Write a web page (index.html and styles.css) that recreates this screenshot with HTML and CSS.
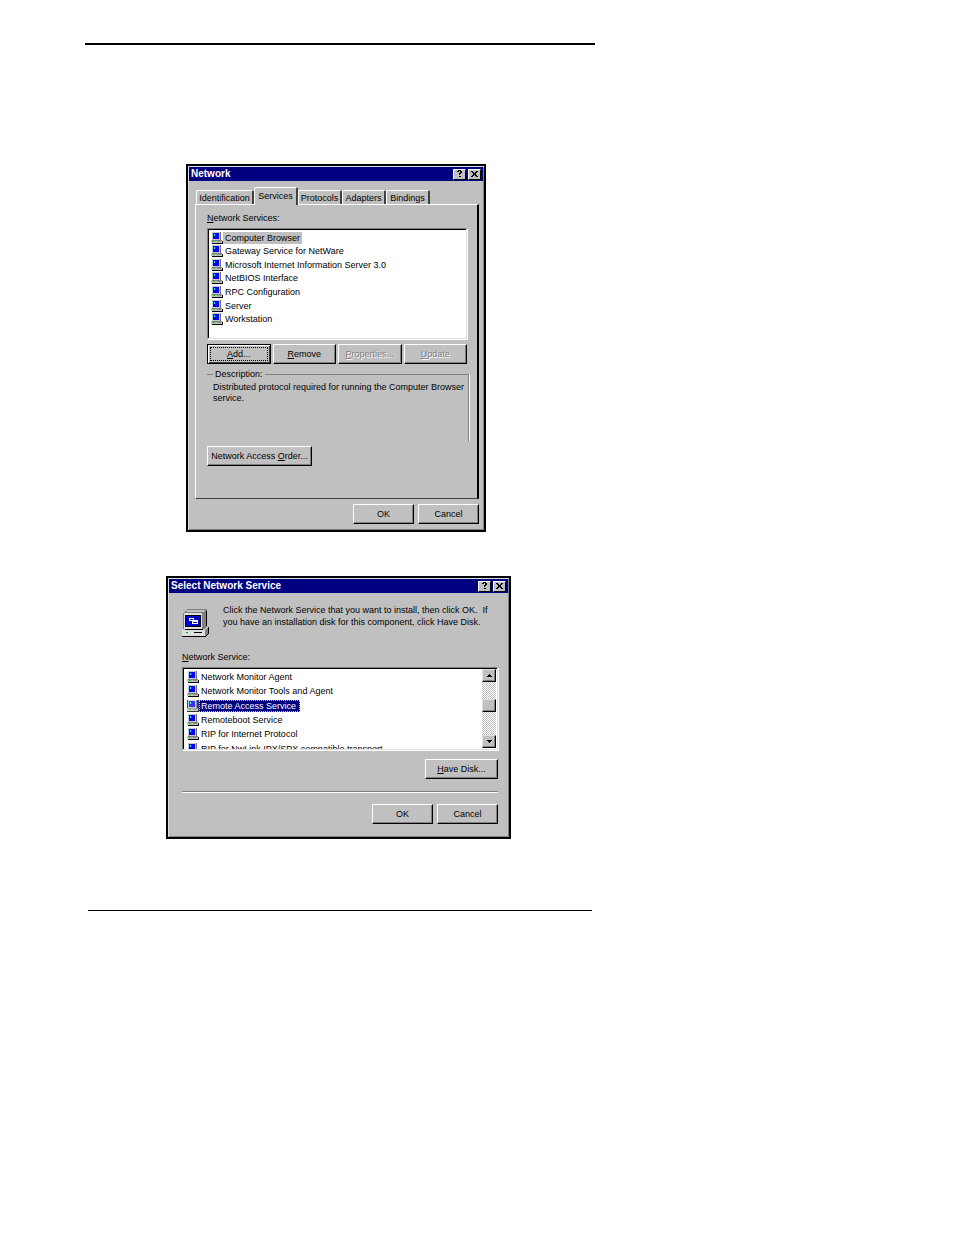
FILE: index.html
```
<!DOCTYPE html>
<html lang="en">
<head>
    <meta charset="UTF-8">
    <meta name="viewport" content="width=device-width, initial-scale=1.0">
    <title>Network - Select Network Service</title>
    <link rel="stylesheet" href="styles.css">
</head>
<body>

    <svg class="symbols" aria-hidden="true">
        <symbol id="pc" viewBox="0 0 12 12">
            <path d="M1 0h9v9H1z" fill="#707070"/>
            <path d="M1 0h8v8H1z" fill="#c8c8c8"/>
            <path d="M2 1h6v6H2z" fill="#0000f0"/>
            <path d="M3 2h1v2H3z" fill="#00ffff"/>
            <path d="M0 8h11v3H0z" fill="#c0c0c0"/>
            <path d="M1 8h10v1H1z" fill="#808080"/>
            <path d="M2 9h2v1H2z" fill="#00e000"/>
            <path d="M6 9h4v1H6z" fill="#909090"/>
            <path d="M1 11h11v1H1zM11 9h1v3h-1z" fill="#000"/>
        </symbol>
        <symbol id="help" viewBox="0 0 7 8">
            <path d="M2 0h3v1H2zM1 1h2v1H1zM4 1h2v2H4zM3 3h2v1H3zM3 4h1v1H3zM3 6h2v1H3z"/>
        </symbol>
        <symbol id="close" viewBox="0 0 7 8">
            <path d="M0 1h2v1H0zM5 1h2v1H5zM1 2h2v1H1zM4 2h2v1H4zM2 3h3v2H2zM1 5h2v1H1zM4 5h2v1H4zM0 6h2v1H0zM5 6h2v1H5z"/>
        </symbol>
    </svg>

    <main class="sheet">

        <section class="dialog network" aria-labelledby="network-title">
            <header class="titlebar">
                <h1 id="network-title">Network</h1>
                <button class="caption" aria-label="Help"><svg><use href="#help"/></svg></button>
                <button class="caption" aria-label="Close"><svg><use href="#close"/></svg></button>
            </header>

            <div class="tabs" role="tablist">
                <button class="tab tab-wide" role="tab">Identification</button>
                <button class="tab active" role="tab" aria-selected="true">Services</button>
                <button class="tab" role="tab">Protocols</button>
                <button class="tab" role="tab">Adapters</button>
                <button class="tab" role="tab">Bindings</button>
            </div>

            <div class="panel" role="tabpanel">
                <p class="label" id="services-label"><u>N</u>etwork Services:</p>
                <ul class="listbox services" role="listbox" aria-labelledby="services-label">
                    <li role="option" class="current"><svg class="pc"><use href="#pc"/></svg><span>Computer Browser</span></li>
                    <li role="option"><svg class="pc"><use href="#pc"/></svg><span>Gateway Service for NetWare</span></li>
                    <li role="option"><svg class="pc"><use href="#pc"/></svg><span>Microsoft Internet Information Server 3.0</span></li>
                    <li role="option"><svg class="pc"><use href="#pc"/></svg><span>NetBIOS Interface</span></li>
                    <li role="option"><svg class="pc"><use href="#pc"/></svg><span>RPC Configuration</span></li>
                    <li role="option"><svg class="pc"><use href="#pc"/></svg><span>Server</span></li>
                    <li role="option"><svg class="pc"><use href="#pc"/></svg><span>Workstation</span></li>
                </ul>

                <div class="actions">
                    <button class="btn default"><span><u>A</u>dd...</span></button>
                    <button class="btn"><span><u>R</u>emove</span></button>
                    <button class="btn" disabled><span><u>P</u>roperties...</span></button>
                    <button class="btn" disabled><span><u>U</u>pdate</span></button>
                </div>

                <fieldset class="description">
                    <legend>Description:</legend>
                    <p>Distributed protocol required for running the Computer Browser<br>service.</p>
                </fieldset>

                <button class="btn order"><span>Network Access <u>O</u>rder...</span></button>
            </div>

            <footer class="buttons">
                <button class="btn">OK</button>
                <button class="btn">Cancel</button>
            </footer>
        </section>

        <section class="dialog select" aria-labelledby="select-title">
            <header class="titlebar">
                <h1 id="select-title">Select Network Service</h1>
                <button class="caption" aria-label="Help"><svg><use href="#help"/></svg></button>
                <button class="caption" aria-label="Close"><svg><use href="#close"/></svg></button>
            </header>

            <div class="content">
                <div class="intro">
                    <svg class="computer" viewBox="0 0 28 28" aria-hidden="true">
                        <path d="M1 4l4-4h19l1 1v16l-3 3H1z" fill="#808080"/>
                        <path d="M2 4h18v16H2z" fill="#dfdfdf"/>
                        <path d="M3 3l2-2h18l-2 2z" fill="#c0c0c0"/>
                        <path d="M3 6h16v12H3z" fill="#000"/>
                        <path d="M4 7h14v10H4z" fill="#0000d0"/>
                        <path d="M7 9h5v3H7zM10 11h6v4h-6z" fill="#fff"/>
                        <path d="M8 10h3v1H8zM11 13h4v1h-4z" fill="#000080"/>
                        <path d="M24 2h1v15h-1zM3 20h18v1H3z" fill="#000"/>
                        <path d="M0 21h23v6H0z" fill="#dfdfdf"/>
                        <path d="M23 21l3-3v6l-3 3z" fill="#808080"/>
                        <path d="M0 27h24v1H0zM26 18h1v7h-1zM24 26h1v1h-1zM25 25h1v1h-1zM12 23h8v1h-8z" fill="#000"/>
                        <path d="M4 23h2v1H4z" fill="#00a000"/>
                    </svg>
                    <p>Click the Network Service that you want to install, then click OK.&nbsp; If you have an installation disk for this component, click Have Disk.</p>
                </div>

                <p class="label" id="service-label"><u>N</u>etwork Service:</p>
                <div class="listbox scroller">
                    <ul class="choices" role="listbox" aria-labelledby="service-label">
                        <li role="option"><svg class="pc"><use href="#pc"/></svg><span>Network Monitor Agent</span></li>
                        <li role="option"><svg class="pc"><use href="#pc"/></svg><span>Network Monitor Tools and Agent</span></li>
                        <li role="option" class="selected" aria-selected="true"><svg class="pc"><use href="#pc"/></svg><span>Remote Access Service</span></li>
                        <li role="option"><svg class="pc"><use href="#pc"/></svg><span>Remoteboot Service</span></li>
                        <li role="option"><svg class="pc"><use href="#pc"/></svg><span>RIP for Internet Protocol</span></li>
                        <li role="option"><svg class="pc"><use href="#pc"/></svg><span>RIP for NwLink IPX/SPX compatible transport</span></li>
                    </ul>
                    <div class="scrollbar">
                        <button class="arrow" aria-label="Scroll up"><svg viewBox="0 0 5 3"><path d="M2 0h1v1H2zM1 1h3v1H1zM0 2h5v1H0z"/></svg></button>
                        <div class="thumb"></div>
                        <button class="arrow" aria-label="Scroll down"><svg viewBox="0 0 5 3"><path d="M0 0h5v1H0zM1 1h3v1H1zM2 2h1v1H2z"/></svg></button>
                    </div>
                </div>

                <button class="btn disk"><span><u>H</u>ave Disk...</span></button>
                <hr>
                <footer class="buttons">
                    <button class="btn">OK</button>
                    <button class="btn">Cancel</button>
                </footer>
            </div>
        </section>

    </main>

</body>
</html>
```

FILE: styles.css
```
* {
    box-sizing: border-box;
}

body {
    margin: 0;
    background: white;
    color: black;
    font-family: "Liberation Sans", Arial, sans-serif;
    font-size: 9px;
    line-height: 12px;
}

h1, p, ul {
    margin: 0;
    padding: 0;
}

button {
    font: inherit;
    color: inherit;
    padding: 0;
}

u {
    text-underline-offset: 1px;
}

svg {
    shape-rendering: crispEdges;
}

.symbols {
    display: none;
}

/* printed page between the two rules */
.sheet {
    max-width: 510px;
    margin: 43px 0 0 85px;
    padding: 119px 0 72px;
    border-top: 2px solid black;
    position: relative;
}
.sheet::after {
    content: "";
    position: absolute;
    left: 3px;
    right: 3px;
    bottom: 0;
    border-bottom: 1px solid black;
}

/* dialogs */
.dialog {
    background: #c0c0c0;
    border: 2px solid black;
    box-shadow: inset 1px 1px #dfdfdf, inset -1px -1px #808080;
    padding: 1px;
}
.network {
    max-width: 300px;
    margin-left: 101px;
}
.select {
    max-width: 345px;
    margin: 44px 0 0 81px;
}

.titlebar {
    display: flex;
    align-items: center;
    gap: 2px;
    height: 14px;
    padding: 0 2px;
    background: #000080;
    color: white;
}
.titlebar h1 {
    flex: 1;
    font-size: 10px;
    font-weight: bold;
}
.caption {
    display: flex;
    align-items: center;
    justify-content: center;
    width: 13px;
    height: 11px;
    background: #c0c0c0;
    border: 1px solid;
    border-color: white black black white;
    color: black;
}
.caption svg {
    width: 7px;
    height: 8px;
}

/* tabs */
.tabs {
    display: flex;
    align-items: flex-end;
    height: 17px;
    margin: 6px 0 0 7px;
}
.tab {
    width: 44px;
    height: 14px;
    background: #c0c0c0;
    border: 1px solid white;
    border-right: 2px solid #404040;
    border-bottom: none;
    border-radius: 2px 2px 0 0;
    white-space: nowrap;
}
.tab-wide {
    width: 58px;
}
.tab.active {
    height: 18px;
    margin-bottom: -1px;
    padding-bottom: 2px;
    z-index: 1;
}

.panel {
    margin: 0 4px 0 6px;
    padding: 7px 10px 32px 11px;
    border: 1px solid white;
    border-right: 2px solid black;
    border-bottom: 1px solid #404040;
}

/* lists */
.listbox {
    margin-top: 4px;
    background: white;
    border: 1px solid;
    border-color: #808080 #dfdfdf #dfdfdf #808080;
    box-shadow: inset 1px 1px black, 1px 1px white;
    list-style: none;
}
.listbox li {
    display: flex;
    align-items: center;
    white-space: nowrap;
}
.listbox span {
    padding: 0 2px;
}
.pc {
    flex: none;
    width: 12px;
    height: 12px;
}
.services {
    display: grid;
    grid-template-rows: repeat(7, 1fr);
    height: 111px;
    padding: 2px 3px 12px;
}
.current span {
    background: #c0c0c0;
}

/* push buttons */
.btn {
    height: 20px;
    background: #c0c0c0;
    border: 1px solid;
    border-color: white black black white;
    box-shadow: inset -1px -1px #808080;
    white-space: nowrap;
}
.btn:disabled {
    color: #808080;
    text-shadow: 1px 1px white;
}
.default {
    border-color: black;
    box-shadow: inset 1px 1px white, inset -1px -1px #404040;
}
.default span {
    display: block;
    margin: 0 3px;
    outline: 1px dotted black;
}
.actions {
    display: grid;
    grid-template-columns: repeat(4, 1fr);
    gap: 2px;
    margin-top: 5px;
}

.description {
    height: 73px;
    margin: 4px -2px 5px 0;
    padding: 2px 0 2px 6px;
    border: 1px solid #808080;
    border-left: none;
    border-bottom: none;
    box-shadow: 1px 0 white;
    line-height: 11px;
    white-space: nowrap;
}
.description legend {
    padding: 0 2px;
    line-height: 12px;
}
.order {
    display: block;
    width: 105px;
}

.buttons {
    display: flex;
    justify-content: flex-end;
    gap: 4px;
}
.buttons .btn {
    width: 61px;
}
.network .buttons {
    margin: 5px 4px 5px 0;
}

/* select network service */
.content {
    padding: 11px 10px 12px 13px;
}
.intro {
    display: flex;
    gap: 13px;
    height: 47px;
}
.computer {
    flex: none;
    width: 28px;
    height: 28px;
    margin-top: 5px;
}
.scroller {
    display: flex;
    height: 83px;
    overflow: hidden;
    padding: 1px;
}
.choices {
    flex: 1;
    display: grid;
    grid-template-rows: repeat(6, 1fr);
    height: 87px;
    padding: 1px 0 0 3px;
}
.selected span {
    padding-right: 4px;
    background: #000080;
    color: white;
    outline: 1px dotted #e0e000;
    outline-offset: -1px;
}
.selected .pc {
    background: #000080;
    opacity: 0.8;
}
.scrollbar {
    display: flex;
    flex-direction: column;
    width: 14px;
    background: repeating-conic-gradient(#c0c0c0 0 25%, white 0 50%) 0 0 / 2px 2px;
}
.arrow, .thumb {
    height: 13px;
    background: #c0c0c0;
    border: 1px solid;
    border-color: #dfdfdf black black #dfdfdf;
    box-shadow: inset -1px -1px #808080;
}
.arrow {
    display: flex;
    align-items: center;
    justify-content: center;
}
.arrow svg {
    width: 5px;
    height: 3px;
}
.thumb {
    margin: 17px 0 auto;
}
.disk {
    display: block;
    width: 73px;
    margin: 9px 0 12px auto;
}
hr {
    height: 2px;
    margin: 0 0 11px;
    border: none;
    border-top: 1px solid #808080;
    border-bottom: 1px solid white;
}
```
